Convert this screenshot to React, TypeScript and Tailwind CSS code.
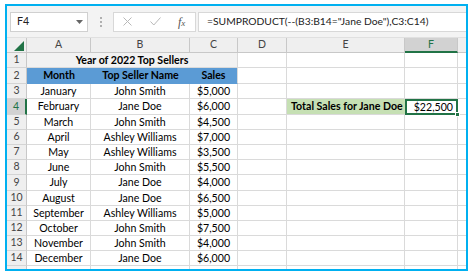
import React from "react";

const rows: [string, string, string][] = [
  ["January", "John Smith", "$5,000"],
  ["February", "Jane Doe", "$6,000"],
  ["March", "John Smith", "$4,500"],
  ["April", "Ashley Williams", "$7,000"],
  ["May", "Ashley Williams", "$3,500"],
  ["June", "John Smith", "$5,500"],
  ["July", "Jane Doe", "$4,000"],
  ["August", "Jane Doe", "$6,500"],
  ["September", "Ashley Williams", "$5,000"],
  ["October", "John Smith", "$7,500"],
  ["November", "John Smith", "$4,000"],
  ["December", "Jane Doe", "$6,000"],
];

const heights = [15, 16, 15, 16, 15, 15, 15, 15, 16, 15, 15, 15, 15, 15];

const font = { fontFamily: "Lato, 'Liberation Sans', sans-serif" };

function RowHeader({ n, active }: { n: number; active?: boolean }) {
  return (
    <div
      className={
        "w-[20px] shrink-0 flex items-center justify-center text-[10.5px] border-b border-[#d4d4d4] " +
        (active
          ? "bg-[#d2d2d2] text-[#217346] border-r-2 border-r-[#217346]"
          : "bg-[#efefef] text-[#444] border-r border-r-[#c8c8c8]")
      }
    >
      {n}
    </div>
  );
}

function Cell({
  w,
  children,
  className = "",
}: {
  w: string;
  children?: React.ReactNode;
  className?: string;
}) {
  return (
    <div
      className={
        w +
        " shrink-0 flex items-center border-r border-b border-[#dadada] text-[10.6px] text-black leading-none whitespace-nowrap " +
        className
      }
    >
      {children}
    </div>
  );
}

export default function App() {
  return (
    <div className="w-[476px] h-[278px] bg-white pt-[4px] pl-[5px]" style={font}>
      <div className="w-[463px] h-[267px] border-2 border-[#00b0f0] flex flex-col overflow-hidden bg-white">
        {/* formula bar */}
        <div className="h-[32px] shrink-0 bg-[#f3f3f3] flex items-center border-b border-[#e0e0e0]">
          <div className="ml-[3px] w-[78px] h-[20px] bg-white border border-[#d0d0d0] flex items-center justify-between pl-[6px] pr-[4px] text-[10.6px] text-[#222]">
            <span>F4</span>
            <svg width="7" height="4" viewBox="0 0 7 4">
              <path d="M0 0 L7 0 L3.5 4 Z" fill="#666" />
            </svg>
          </div>
          <div className="w-[25px] flex flex-col items-center gap-[2px]">
            <div className="w-[2px] h-[2px] bg-[#b0b0b0]" />
            <div className="w-[2px] h-[2px] bg-[#b0b0b0]" />
            <div className="w-[2px] h-[2px] bg-[#b0b0b0]" />
          </div>
          <div className="w-[83px] h-[20px] bg-white border border-[#d8d8d8] flex items-center">
            <svg className="ml-[9px]" width="9" height="9" viewBox="0 0 9 9">
              <path d="M0.5 0.5 L8.5 8.5 M8.5 0.5 L0.5 8.5" stroke="#b8b8b8" strokeWidth="1" />
            </svg>
            <svg className="ml-[18px]" width="11" height="9" viewBox="0 0 11 9">
              <path d="M0.5 4.5 L3.8 8 L10.5 0.5" stroke="#b8b8b8" strokeWidth="1" fill="none" />
            </svg>
            <span
              className="ml-[17px] text-[12px] italic text-[#555]"
              style={{ fontFamily: "'Liberation Serif', serif" }}
            >
              f<span className="text-[9px]">x</span>
            </span>
          </div>
          <div className="ml-[2px] flex-1 h-[20px] bg-white border-l border-y border-[#d8d8d8] flex items-center pl-[8px] text-[10.3px] text-[#222] whitespace-nowrap">
            =SUMPRODUCT(--(B3:B14="Jane Doe"),C3:C14)
          </div>
        </div>

        {/* column headers */}
        <div className="h-[15px] shrink-0 flex bg-[#efefef] text-[10.5px] text-[#444]">
          <div className="w-[20px] shrink-0 border-r border-b border-[#c8c8c8] flex items-end justify-end pr-[2px] pb-[1px]">
            <svg width="10" height="10" viewBox="0 0 10 10">
              <path d="M10 0 L10 10 L0 10 Z" fill="#217346" />
            </svg>
          </div>
          {[
            ["A", "w-[64px]"],
            ["B", "w-[99px]"],
            ["C", "w-[48px]"],
            ["D", "w-[49px]"],
            ["E", "w-[118px]"],
          ].map(([l, w]) => (
            <div
              key={l}
              className={w + " shrink-0 border-r border-b border-[#c8c8c8] flex items-center justify-center"}
            >
              {l}
            </div>
          ))}
          <div className="w-[53px] shrink-0 bg-[#d2d2d2] border-r border-[#c8c8c8] border-b-2 border-b-[#217346] flex items-center justify-center text-[#217346]">
            F
          </div>
          <div className="w-[8px] shrink-0 border-b border-[#c8c8c8]" />
        </div>

        {/* row 1 */}
        <div className="h-[15px] shrink-0 flex">
          <RowHeader n={1} />
          <Cell w="w-[211px]" className="justify-center font-bold bg-[#f2f2f2]">
            Year of 2022 Top Sellers
          </Cell>
          <Cell w="w-[49px]" />
          <Cell w="w-[118px]" />
          <Cell w="w-[53px]" />
          <Cell w="w-[8px]" className="border-r-0" />
        </div>

        {/* row 2 */}
        <div className="h-[16px] shrink-0 flex">
          <RowHeader n={2} />
          <Cell w="w-[64px]" className="justify-center font-bold bg-[#5b9bd5] border-r-0 border-b-[#5b9bd5]">
            Month
          </Cell>
          <Cell w="w-[99px]" className="justify-center font-bold bg-[#5b9bd5] border-r-0 border-b-[#5b9bd5]">
            Top Seller Name
          </Cell>
          <Cell w="w-[48px]" className="justify-center font-bold bg-[#5b9bd5] border-b-[#5b9bd5]">
            Sales
          </Cell>
          <Cell w="w-[49px]" />
          <Cell w="w-[118px]" />
          <Cell w="w-[53px]" />
          <Cell w="w-[8px]" className="border-r-0" />
        </div>

        {rows.map(([m, n, s], i) => {
          const r = i + 3;
          const h = heights[i + 2];
          const isSel = r === 4;
          return (
            <div key={r} className="shrink-0 flex" style={{ height: h }}>
              <RowHeader n={r} active={isSel} />
              <Cell w="w-[64px]" className="justify-center">
                {m}
              </Cell>
              <Cell w="w-[99px]" className="justify-center">
                {n}
              </Cell>
              <Cell w="w-[48px]" className="justify-center">
                {s}
              </Cell>
              <Cell w="w-[49px]" />
              {isSel ? (
                <Cell w="w-[118px]" className="bg-[#c6e0b4] font-bold pl-[4px] border-r-0">
                  Total Sales for Jane Doe
                </Cell>
              ) : (
                <Cell w="w-[118px]" />
              )}
              {isSel ? (
                <div className="w-[53px] shrink-0 relative border-2 border-[#217346] flex items-center justify-end pr-[3px] text-[10.6px] leading-none">
                  $22,500
                  <div className="absolute right-[-4px] bottom-[-4px] w-[5px] h-[5px] bg-[#217346] border border-white" />
                </div>
              ) : (
                <Cell w="w-[53px]" />
              )}
              <Cell w="w-[8px]" className="border-r-0" />
            </div>
          );
        })}

        {/* partial row 15 */}
        <div className="flex-1 flex">
          <div className="w-[20px] shrink-0 bg-[#efefef] border-r border-[#c8c8c8]" />
          <div className="w-[64px] shrink-0 border-r border-[#dadada]" />
          <div className="w-[99px] shrink-0 border-r border-[#dadada]" />
          <div className="w-[48px] shrink-0 border-r border-[#dadada]" />
          <div className="w-[49px] shrink-0 border-r border-[#dadada]" />
          <div className="w-[118px] shrink-0 border-r border-[#dadada]" />
          <div className="w-[53px] shrink-0 border-r border-[#dadada]" />
        </div>
      </div>
    </div>
  );
}
